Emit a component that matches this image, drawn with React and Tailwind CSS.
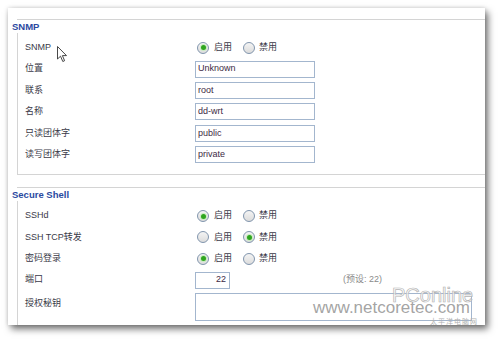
import React from "react";

const FONT = { fontFamily: '"Liberation Sans", "Noto Sans CJK SC", sans-serif' };

function Radio({ checked }) {
  return (
    <span className="w-[12px] h-[12px] rounded-full border border-[#8195ad] bg-gradient-to-b from-[#f4f4f4] to-[#dcdcdc] flex items-center justify-center shrink-0">
      {checked && <span className="w-[5px] h-[5px] rounded-full bg-[#2fa51f] shadow-[0_0_0_1px_#c8ecc0]" />}
    </span>
  );
}

function RadioPair({ on }) {
  return (
    <div className="flex items-center pl-[2px] text-[#3a3a48]">
      <Radio checked={on} />
      <span className="ml-[5px] w-[29px]">启用</span>
      <Radio checked={!on} />
      <span className="ml-[4px]">禁用</span>
    </div>
  );
}

function Row({ label, children }) {
  return (
    <div className="flex items-center h-[21.4px]">
      <div className="w-[170px] text-[#3a3a48]">{label}</div>
      {children}
    </div>
  );
}

function TextBox({ value, className = "w-[120px]", right }) {
  return (
    <div
      className={`h-[17px] border border-[#a3b6ce] bg-white flex items-center px-[2px] text-[#402a44] ${className} ${right ? "justify-end pr-[3px]" : ""}`}
    >
      {value}
    </div>
  );
}

function Section({ title, children, className = "" }) {
  return (
    <div className={`ml-[9px] border-t border-[#d4d4d4] ${className}`}>
      <div className="-ml-[5px] h-[12px] leading-[12px] mt-[1px] font-bold text-[9.5px] text-[#2b4a9f]">{title}</div>
      <div className="border-l border-b border-[#d4d4d4] pl-[7px] pt-[4px]">{children}</div>
    </div>
  );
}

export default function App() {
  return (
    <div className="w-[500px] h-[340px] bg-white relative overflow-hidden text-[9px]" style={FONT}>
      <div className="absolute left-0 top-0 w-[500px] h-[340px] pt-[8px] pl-[8px]">
        <div className="w-[477px] h-[317px] bg-white overflow-hidden shadow-[3px_4px_7px_rgba(0,0,0,0.55),0_0_4px_rgba(0,0,0,0.15)] pt-[11px]">
          <Section title="SNMP">
            <div className="pb-[8.5px]">
              <Row label="SNMP">
                <RadioPair on />
              </Row>
              <Row label="位置">
                <TextBox value="Unknown" />
              </Row>
              <Row label="联系">
                <TextBox value="root" />
              </Row>
              <Row label="名称">
                <TextBox value="dd-wrt" />
              </Row>
              <Row label="只读团体字">
                <TextBox value="public" />
              </Row>
              <Row label="读写团体字">
                <TextBox value="private" />
              </Row>
            </div>
          </Section>

          <Section title="Secure Shell" className="mt-[12.5px]">
            <div className="h-[130px]">
              <Row label="SSHd">
                <RadioPair on />
              </Row>
              <Row label="SSH TCP转发">
                <RadioPair on={false} />
              </Row>
              <Row label="密码登录">
                <RadioPair on />
              </Row>
              <Row label="端口">
                <TextBox value="22" className="w-[35px]" right />
                <span className="ml-[113px] text-[#8a8a8a]">(预设: 22)</span>
              </Row>
              <div className="flex pt-[2px]">
                <div className="w-[170px] pt-[4px] text-[#3a3a48]">授权秘钥</div>
                <div className="w-[277px] h-[28px] border border-[#a3b6ce] bg-white" />
              </div>
            </div>
          </Section>
        </div>
      </div>

      {/* mouse cursor */}
      <svg className="absolute left-[57px] top-[46px]" width="11" height="17" viewBox="0 0 11 17">
        <path d="M0.5 0.5 L0.5 13 L3.5 10.2 L5.8 15.5 L7.6 14.7 L5.4 9.6 L9.5 9.6 Z" fill="#fff" stroke="#333" strokeWidth="0.9" strokeLinejoin="round" />
      </svg>

      {/* watermark */}
      <div className="absolute left-[392px] top-[285px] text-[20px] leading-[20px] text-white/70 [-webkit-text-stroke:0.7px_#b4b4b4]">
        PConline
      </div>
      <div className="absolute left-[313px] top-[298px] text-[17px] leading-[20px] text-[#8c8c8c]/80">
        www.netcoretec.com
      </div>
      <div className="absolute left-[430px] top-[318px] text-[7px] leading-[8px] text-[#b0b0b0] tracking-[1px]">太平洋电脑网</div>
    </div>
  );
}
